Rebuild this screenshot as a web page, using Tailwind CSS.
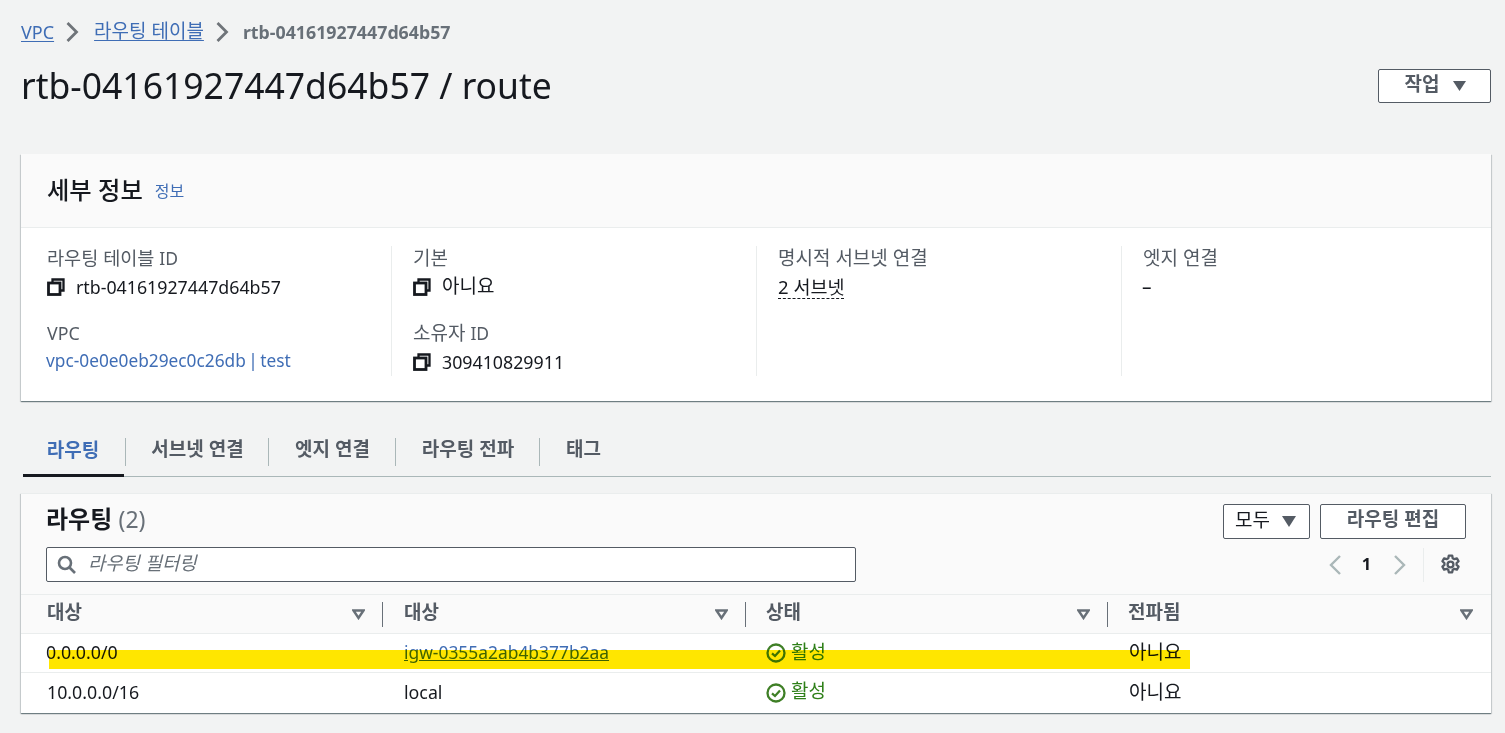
<!DOCTYPE html>
<html lang="ko">
<head>
<meta charset="utf-8">
<script src="https://cdn.jsdelivr.net/npm/@tailwindcss/browser@4"></script>
<title>route</title>
</head>
<body class="m-0 bg-[#f2f3f3] font-['Noto_Sans','Noto_Sans_CJK_KR',sans-serif] text-[#16191f] overflow-hidden">
<div class="relative w-[1505px] h-[733px] pl-[21px] pr-[14px] pt-[20px]">
  <!-- breadcrumb -->
  <nav class="flex items-center h-[24px] text-[19px] leading-[24px]">
    <a class="text-[#3f6db5] underline underline-offset-2 text-[18px]">VPC</a>
    <svg class="w-[14px] h-[22px] ml-[11px] mr-[15px]" viewBox="0 0 14 22" fill="none" stroke="#6f7479" stroke-width="2.800"><path d="M2.500 2l9 9-9 9"/></svg>
    <a class="text-[#3f6db5] underline underline-offset-2 relative -top-[1px]">라우팅 테이블</a>
    <svg class="w-[14px] h-[22px] ml-[11px] mr-[14px]" viewBox="0 0 14 22" fill="none" stroke="#6f7479" stroke-width="2.800"><path d="M2.500 2l9 9-9 9"/></svg>
    <span class="text-[#687078] font-bold text-[17.800px]">rtb-04161927447d64b57</span>
  </nav>
  <!-- title -->
  <div class="flex justify-between items-start mt-[18px] h-[92px]">
    <h1 class="text-[35.500px] leading-[50px] font-normal m-0 -mt-[2px]">rtb-04161927447d64b57 / route</h1>
    <button class="flex items-center justify-center w-[113px] h-[34px] mt-[7px] bg-white border border-[#545b64] rounded-[2px] text-[19px] font-bold text-[#545b64]">
      <span class="-mt-[3px] ml-[2px]">작업</span>
      <svg class="w-[13px] h-[10px] ml-[14px]" viewBox="0 0 13 10" fill="#545b64"><path d="M0 0h13L6.500 10z"/></svg>
    </button>
  </div>

  <!-- details card -->
  <section class="w-[1470px] h-[247px] bg-white shadow-[0_1px_1px_0_rgba(0,28,36,0.4),1px_1px_1px_0_rgba(0,28,36,0.12),-1px_1px_1px_0_rgba(0,28,36,0.12)]">
    <header class="flex items-center h-[74px] pl-[26px] bg-[#fafafa] border-b border-[#eaeded]">
      <h2 class="text-[24.300px] font-medium leading-[30px] m-0 -mt-[2px]">세부 정보</h2>
      <a class="text-[16px] text-[#3f6db5] ml-[12px] font-normal">정보</a>
    </header>
    <div class="grid grid-cols-[371px_365px_365px_369px] pt-[18px] text-[19px] leading-[24px]">
      <div class="h-[130px] pl-[26px] border-r border-[#eaeded]">
        <div class="text-[#545b64] text-[18.600px]">라우팅 테이블 <span class="text-[17.500px]">ID</span></div>
        <div class="flex items-center mt-[5px] h-[24px] text-[17.800px]">
          <svg class="w-[18px] h-[18px] mr-[11px]" viewBox="0 0 18 18" fill="none" stroke="#16191f" stroke-width="2.300"><path d="M5.500 4.500V1.500h11v11h-3"/><rect x="1.500" y="5" width="11.500" height="11.500" stroke-width="2.800"/></svg>
          <span>rtb-04161927447d64b57</span>
        </div>
        <div class="text-[#545b64] mt-[22px] text-[17.800px]">VPC</div>
        <div class="text-[#3f6db5] mt-[4px] text-[17.300px] [word-spacing:-2px] -ml-[1px]">vpc-0e0e0eb29ec0c26db | test</div>
      </div>
      <div class="h-[130px] pl-[21px] border-r border-[#eaeded]">
        <div class="text-[#545b64]">기본</div>
        <div class="flex items-center mt-[5px] h-[24px]">
          <svg class="w-[18px] h-[18px] mr-[11px]" viewBox="0 0 18 18" fill="none" stroke="#16191f" stroke-width="2.300"><path d="M5.500 4.500V1.500h11v11h-3"/><rect x="1.500" y="5" width="11.500" height="11.500" stroke-width="2.800"/></svg>
          <span class="-mt-[3px]">아니요</span>
        </div>
        <div class="text-[#545b64] mt-[22px]">소유자 <span class="text-[17.500px]">ID</span></div>
        <div class="flex items-center mt-[5px] h-[24px] text-[17.800px]">
          <svg class="w-[18px] h-[18px] mr-[11px]" viewBox="0 0 18 18" fill="none" stroke="#16191f" stroke-width="2.300"><path d="M5.500 4.500V1.500h11v11h-3"/><rect x="1.500" y="5" width="11.500" height="11.500" stroke-width="2.800"/></svg>
          <span>309410829911</span>
        </div>
      </div>
      <div class="h-[130px] pl-[21px] border-r border-[#eaeded]">
        <div class="text-[#545b64]">명시적 서브넷 연결</div>
        <div class="mt-[5px] h-[24px]"><span class="border-b border-dashed border-[#16191f] inline-block leading-[22px] -mt-[2px] text-[18.500px]">2 서브넷</span></div>
      </div>
      <div class="h-[130px] pl-[21px]">
        <div class="text-[#545b64]">엣지 연결</div>
        <div class="mt-[5px] -ml-[1px]">–</div>
      </div>
    </div>
  </section>

  <!-- tabs -->
  <div class="flex items-center w-[1468px] ml-[2px] h-[41px] mt-[35px] border-b border-[#aab7b8] text-[19px] font-bold text-[#545b64]">
    <div class="relative h-[40px] w-[102px] flex items-center justify-center text-[#3f6db5] pb-[9px] pr-[2px]"><span class="-mt-[2px]">라우팅</span><span class="absolute left-0 right-[1px] bottom-[-1px] h-[3px] bg-[#16191f]"></span></div>
    <div class="flex items-center h-[28px] mb-[9px] border-l border-[#aab7b8]">
      <span class="w-[142px] text-center -mt-[5px] pl-[1px]">서브넷 연결</span>
    </div>
    <div class="flex items-center h-[28px] mb-[9px] border-l border-[#aab7b8]">
      <span class="w-[126px] text-center -mt-[5px] pl-[1px]">엣지 연결</span>
    </div>
    <div class="flex items-center h-[28px] mb-[9px] border-l border-[#aab7b8]">
      <span class="w-[143px] text-center -mt-[5px] pl-[1px]">라우팅 전파</span>
    </div>
    <div class="flex items-center h-[28px] mb-[9px] border-l border-[#aab7b8]">
      <span class="pl-[26px] -mt-[5px]">태그</span>
    </div>
  </div>

  <!-- routes card -->
  <section class="w-[1470px] h-[220px] mt-[16px] bg-white shadow-[0_1px_1px_0_rgba(0,28,36,0.4),1px_1px_1px_0_rgba(0,28,36,0.12),-1px_1px_1px_0_rgba(0,28,36,0.12)]">
    <div class="h-[102px] bg-[#fafafa] border-t border-[#eaeded] border-b pl-[25px] pr-[25px]">
      <div class="flex justify-between items-start h-[53px]">
        <h2 class="text-[24px] font-bold leading-[30px] m-0 mt-[10px]">라우팅 <span class="font-normal text-[#687078] text-[23px]">(2)</span></h2>
        <div class="flex gap-[10px] mt-[10px]">
          <button class="flex items-center justify-center w-[87px] h-[35px] bg-white border border-[#545b64] rounded-[2px] text-[19px] text-[#16191f]">
            <span class="-mt-[3px] -ml-[2px]">모두</span>
            <svg class="w-[14px] h-[11px] ml-[12px]" viewBox="0 0 13 10" fill="#545b64"><path d="M0 0h13L6.500 10z"/></svg>
          </button>
          <button class="w-[146px] h-[35px] bg-white border border-[#545b64] rounded-[2px] text-[19px] font-bold text-[#545b64]"><span class="relative -top-[2px]">라우팅 편집</span></button>
        </div>
      </div>
      <div class="flex justify-between items-center h-[35px]">
        <div class="flex items-center w-[810px] h-[35px] bg-white border border-[#545b64] rounded-[2px] pl-[10px]">
          <svg class="w-[19px] h-[19px]" viewBox="0 0 19 19" fill="none" stroke="#687078" stroke-width="2.600"><circle cx="8" cy="8" r="6"/><path d="M12.500 12.500L18 18"/></svg>
          <span class="ml-[12px] italic text-[18.800px] text-[#687078] -mt-[3px]">라우팅 필터링</span>
        </div>
        <div class="flex items-center">
          <svg class="w-[14px] h-[22px]" viewBox="0 0 14 22" fill="none" stroke="#aab7b8" stroke-width="2.400"><path d="M12 2L3 11l9 9"/></svg>
          <span class="w-[51px] text-center font-bold text-[16.500px] text-[#16191f] pr-[2px]">1</span>
          <svg class="w-[14px] h-[22px]" viewBox="0 0 14 22" fill="none" stroke="#aab7b8" stroke-width="2.400"><path d="M2 2l9 9-9 9"/></svg>
          <span class="w-px h-[34px] bg-[#eaeded] ml-[16px] mr-[16px]"></span>
          <svg class="w-[21px] h-[21px] mr-[5px]" viewBox="0 0 20 20" fill="none" stroke="#545b64" stroke-width="2.200"><circle cx="10" cy="10" r="2.800"/><path d="M8.400 1.500h3.200l.5 2.500 1.600.9 2.400-.8 1.600 2.800-1.900 1.700v1.800l1.900 1.700-1.600 2.800-2.400-.8-1.600.9-.5 2.500H8.400l-.5-2.500-1.600-.9-2.400.8-1.600-2.800 1.900-1.700V8.600L2.300 6.900l1.600-2.800 2.400.8 1.600-.9z" stroke-linejoin="round"/></svg>
        </div>
      </div>
    </div>
    <div class="grid grid-cols-[362px_363px_362px_383px] h-[39px] bg-[#fafafa] border-b border-[#eaeded] text-[19px] font-bold text-[#545b64] items-center">
      <div class="relative pl-[26px] h-full flex items-center"><span class="-mt-[4px]">대상</span>
        <svg class="absolute right-[18px] top-[14px] w-[13px] h-[11px]" viewBox="0 0 13 11" fill="none" stroke="#687078" stroke-width="2.400"><path d="M1.500 1.500h10L6.500 9z"/></svg>
        <span class="absolute right-0 top-[7px] w-px h-[25px] bg-[#687078]"></span></div>
      <div class="relative pl-[21px] h-full flex items-center"><span class="-mt-[4px]">대상</span>
        <svg class="absolute right-[18px] top-[14px] w-[13px] h-[11px]" viewBox="0 0 13 11" fill="none" stroke="#687078" stroke-width="2.400"><path d="M1.500 1.500h10L6.500 9z"/></svg>
        <span class="absolute right-0 top-[7px] w-px h-[25px] bg-[#687078]"></span></div>
      <div class="relative pl-[20px] h-full flex items-center"><span class="-mt-[4px]">상태</span>
        <svg class="absolute right-[18px] top-[14px] w-[13px] h-[11px]" viewBox="0 0 13 11" fill="none" stroke="#687078" stroke-width="2.400"><path d="M1.500 1.500h10L6.500 9z"/></svg>
        <span class="absolute right-0 top-[7px] w-px h-[25px] bg-[#687078]"></span></div>
      <div class="relative pl-[20px] h-full flex items-center"><span class="-mt-[4px]">전파됨</span>
        <svg class="absolute right-[18px] top-[14px] w-[13px] h-[11px]" viewBox="0 0 13 11" fill="none" stroke="#687078" stroke-width="2.400"><path d="M1.500 1.500h10L6.500 9z"/></svg></div>
    </div>
    <div class="grid grid-cols-[362px_363px_362px_383px] h-[39px] border-b border-[#eaeded] text-[17.800px] items-center">
      <div class="pl-[25px] -mt-[2px]">0.0.0.0/0</div>
      <div class="pl-[21px] -mt-[2px] text-[#3f6db5] underline text-[17.400px]">igw-0355a2ab4b377b2aa</div>
      <div class="pl-[20px] flex items-center text-[#2f8019] text-[19px]">
        <svg class="w-[20px] h-[20px] mr-[5px]" viewBox="0 0 20 20" fill="none" stroke="#3f7f26" stroke-width="2.300"><circle cx="10" cy="10" r="8.500"/><path d="M6 10.300l3 2.700 5-5.500"/></svg>
        <span class="-mt-[2px]">활성</span></div>
      <div class="pl-[21px] -mt-[1px] text-[19px]">아니요</div>
    </div>
    <div class="grid grid-cols-[362px_363px_362px_383px] h-[39px] text-[17.800px] items-center">
      <div class="pl-[26px]">10.0.0.0/16</div>
      <div class="pl-[21px]">local</div>
      <div class="pl-[20px] flex items-center text-[#2f8019] text-[19px]">
        <svg class="w-[20px] h-[20px] mr-[5px]" viewBox="0 0 20 20" fill="none" stroke="#3f7f26" stroke-width="2.300"><circle cx="10" cy="10" r="8.500"/><path d="M6 10.300l3 2.700 5-5.500"/></svg>
        <span class="-mt-[2px]">활성</span></div>
      <div class="pl-[21px] -mt-[1px] text-[19px]">아니요</div>
    </div>
  </section>

  <!-- highlighter stroke -->
  <div class="absolute left-[49px] top-[650px] w-[1141px] h-[19px] bg-[#ffe600] mix-blend-multiply"></div>
</div>
</body>
</html>
